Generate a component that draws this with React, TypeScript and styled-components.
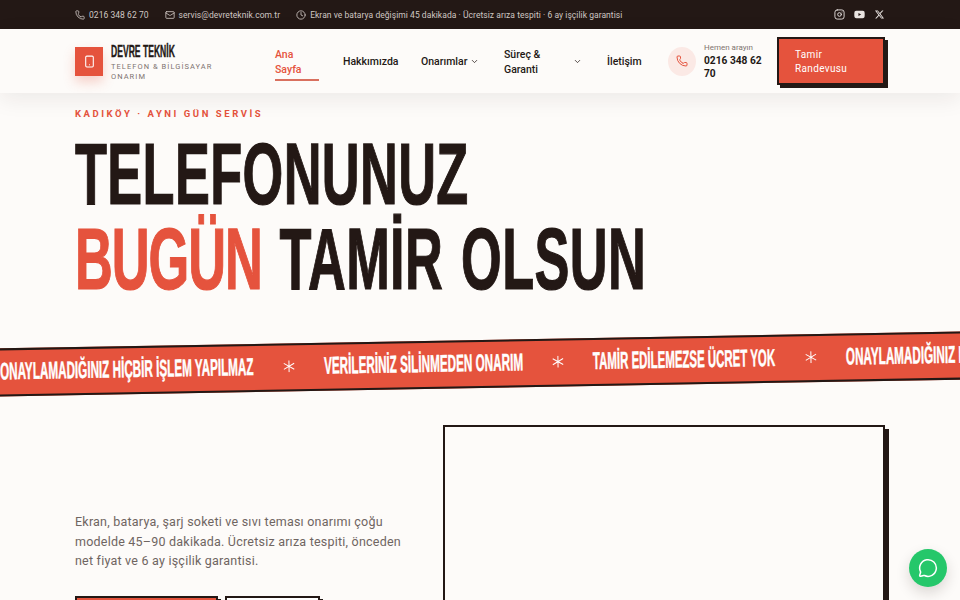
import { Fragment } from "react";
import styled, { createGlobalStyle } from "styled-components";
import { ChevronDown, Clock, Instagram, Mail, MessageCircle, Phone, Smartphone } from "lucide-react";
import { FaYoutube } from "react-icons/fa";
import { RiTwitterXFill } from "react-icons/ri";

const ink = "#231815";
const coral = "#e5533d";
const paper = "#fdfbf9";
const bodyFont = `"Roboto", "Liberation Sans", sans-serif`;
const displayFont = `"Liberation Sans", "Arial", sans-serif`;

const GlobalStyle = createGlobalStyle`
    html, body {
        margin: 0;
        height: 600px;
        overflow: hidden;
        background-color: ${paper};
        color: ${ink};
        font-family: ${bodyFont};
    }
    * {
        box-sizing: border-box;
    }
`;

const TopBar = styled.div`
    height: 29px;
    padding: 0 75px;
    background-color: ${ink};
    color: #cfc7c3;
    font-size: 8.5px;
    display: flex;
    align-items: center;
    justify-content: space-between;
`;
const TopInfo = styled.div`
    display: flex;
    gap: 16px;
`;
const TopItem = styled.span`
    display: flex;
    align-items: center;
    gap: 4px;
    letter-spacing: 0.05px;
    white-space: nowrap;
`;
const Socials = styled.div`
    display: flex;
    align-items: center;
    gap: 9px;
    color: #e9e4e1;
`;

const Header = styled.header`
    position: relative;
    z-index: 2;
    height: 64px;
    padding: 0 75px;
    background-color: ${paper};
    box-shadow: 0 6px 22px rgba(35, 24, 21, 0.08);
    display: flex;
    align-items: center;
`;
const Brand = styled.div`
    width: 200px;
    display: flex;
    align-items: center;
    gap: 8px;
`;
const BrandMark = styled.div`
    width: 28px;
    height: 29px;
    flex: none;
    background-color: ${coral};
    color: #fff;
    box-shadow: 0 6px 12px rgba(229, 83, 61, 0.25);
    display: flex;
    align-items: center;
    justify-content: center;
`;
const BrandText = styled.div`
    width: 110px;
    padding-top: 4px;
    display: flex;
    flex-direction: column;
    gap: 3px;
`;
const BrandName = styled.span`
    display: inline-block;
    font-family: ${displayFont};
    font-weight: 700;
    font-size: 16.5px;
    line-height: 15px;
    white-space: nowrap;
    -webkit-text-stroke: 0.4px ${ink};
    transform: scaleX(0.52);
    transform-origin: left;
`;
const BrandSub = styled.span`
    font-size: 7.5px;
    line-height: 10px;
    letter-spacing: 1.05px;
    color: #7d7370;
`;

const Nav = styled.nav`
    display: flex;
    align-items: center;
`;
const NavLink = styled.a<{ $width: number; $active?: boolean }>`
    width: ${(p) => p.$width}px;
    flex: none;
    padding: 5px 0 2px;
    font-size: 10.5px;
    font-weight: 500;
    line-height: 15px;
    color: ${(p) => (p.$active ? coral : ink)};
    border-bottom: 2px solid ${(p) => (p.$active ? "#d9705f" : "transparent")};
    display: flex;
    align-items: center;
    justify-content: space-between;
`;
const NavGap = styled.span<{ $width: number }>`
    width: ${(p) => p.$width}px;
    flex: none;
`;

const CallBox = styled.div`
    margin-left: 27px;
    width: 100px;
    flex: none;
    display: flex;
    align-items: center;
    gap: 8px;
`;
const CallIcon = styled.div`
    width: 28px;
    height: 29px;
    flex: none;
    border-radius: 50%;
    background-color: #fbe9e5;
    color: ${coral};
    display: flex;
    align-items: center;
    justify-content: center;
`;
const CallText = styled.div`
    width: 60px;
    display: flex;
    flex-direction: column;
`;
const CallLabel = styled.span`
    font-size: 8px;
    line-height: 12px;
    color: #7d7370;
`;
const CallNumber = styled.span`
    font-size: 10.2px;
    font-weight: 700;
    line-height: 13px;
`;
const CtaButton = styled.button`
    margin-left: auto;
    width: 108px;
    height: 48px;
    padding: 2px 24px 0 16px;
    border: 2px solid ${ink};
    background-color: ${coral};
    color: #fff;
    font-family: ${bodyFont};
    font-size: 10px;
    font-weight: 400;
    line-height: 14px;
    letter-spacing: 0.35px;
    text-align: left;
    box-shadow: 3px 3px 0 ${ink};
`;

const Hero = styled.section`
    padding: 14px 75px 0;
`;
const Eyebrow = styled.div`
    font-size: 9.5px;
    font-weight: 700;
    line-height: 14px;
    letter-spacing: 2.55px;
    color: ${coral};
`;
const HeroTitle = styled.h1`
    margin: 10px 0 0;
    font-family: ${displayFont};
    font-size: 88px;
    font-weight: 700;
    line-height: 85px;
    letter-spacing: 0.6px;
    word-spacing: 5px;
    white-space: nowrap;
    -webkit-text-stroke: 1.2px currentColor;
    transform: scaleX(0.595);
    transform-origin: left;
`;
const Accent = styled.span`
    color: ${coral};
    letter-spacing: -1.8px;
`;

const Ribbon = styled.div`
    margin: 39px 0 0 -20px;
    width: 1000px;
    height: 48px;
    overflow: hidden;
    padding: 0 0 2px 20px;
    background-color: ${coral};
    border-top: 2px solid ${ink};
    border-bottom: 2px solid ${ink};
    transform: rotate(-1deg);
    display: flex;
    align-items: center;
    gap: 28px;
    color: #fff;
`;
const Phrase = styled.span<{ $width: number }>`
    width: ${(p) => p.$width}px;
    flex: none;
`;
const PhraseText = styled.span<{ $scale: number }>`
    display: inline-block;
    font-family: ${displayFont};
    font-size: 24px;
    font-weight: 700;
    white-space: nowrap;
    -webkit-text-stroke: 0.5px #fff;
    transform: scaleX(${(p) => p.$scale});
    transform-origin: left;
`;
const Star = styled.span`
    width: 14px;
    flex: none;
    display: flex;
    justify-content: center;
`;

const Lower = styled.section`
    margin-top: 37px;
    padding: 0 75px;
    display: grid;
    grid-template-columns: 335px 442px;
    justify-content: space-between;
`;
const Intro = styled.div`
    padding-top: 87px;
`;
const Lead = styled.p`
    margin: 0;
    font-size: 12.5px;
    line-height: 19.5px;
    letter-spacing: 0.22px;
    color: #6f6561;
`;
const Actions = styled.div`
    margin-top: 25px;
    display: flex;
    gap: 7px;
`;
const ActionButton = styled.button<{ $primary?: boolean; $width: number }>`
    width: ${(p) => p.$width}px;
    height: 44px;
    border: 2px solid ${ink};
    background-color: ${(p) => (p.$primary ? coral : "#fff")};
    box-shadow: 3px 3px 0 ${ink};
`;
const MediaFrame = styled.div`
    height: 420px;
    background-color: ${paper};
    border: 2px solid ${ink};
    box-shadow: 4px 4px 0 ${ink};
`;

const ChatButton = styled.button`
    position: fixed;
    right: 13px;
    bottom: 13px;
    width: 38px;
    height: 38px;
    padding: 0;
    border: none;
    border-radius: 50%;
    background-color: #25c76a;
    color: #fff;
    box-shadow: 0 6px 14px rgba(35, 24, 21, 0.16);
    display: flex;
    align-items: center;
    justify-content: center;
`;

const phrases = [
    { text: "ONAYLAMADIĞINIZ HİÇBİR İŞLEM YAPILMAZ", width: 254, scale: 0.487 },
    { text: "VERİLERİNİZ SİLİNMEDEN ONARIM", width: 199, scale: 0.488 },
    { text: "TAMİR EDİLEMEZSE ÜCRET YOK", width: 183, scale: 0.477 },
    { text: "ONAYLAMADIĞINIZ HİÇBİR İŞLEM YAPILMAZ", width: 254, scale: 0.487 },
];

export default function App() {
    return (
        <>
            <GlobalStyle />
            <TopBar>
                <TopInfo>
                    <TopItem>
                        <Phone size={10} />
                        0216 348 62 70
                    </TopItem>
                    <TopItem>
                        <Mail size={10} />
                        servis@devreteknik.com.tr
                    </TopItem>
                    <TopItem>
                        <Clock size={10} />
                        Ekran ve batarya değişimi 45 dakikada · Ücretsiz arıza tespiti · 6 ay işçilik garantisi
                    </TopItem>
                </TopInfo>
                <Socials>
                    <Instagram size={11} />
                    <FaYoutube size={11} />
                    <RiTwitterXFill size={11} />
                </Socials>
            </TopBar>
            <Header>
                <Brand>
                    <BrandMark>
                        <Smartphone size={13} />
                    </BrandMark>
                    <BrandText>
                        <BrandName>DEVRE TEKNİK</BrandName>
                        <BrandSub>TELEFON &amp; BİLGİSAYAR ONARIM</BrandSub>
                    </BrandText>
                </Brand>
                <Nav>
                    <NavLink $width={44} $active>
                        Ana Sayfa
                    </NavLink>
                    <NavGap $width={24} />
                    <NavLink $width={54}>Hakkımızda</NavLink>
                    <NavGap $width={24} />
                    <NavLink $width={58}>
                        Onarımlar
                        <ChevronDown size={9} />
                    </NavLink>
                    <NavGap $width={25} />
                    <NavLink $width={78}>
                        Süreç &amp;<br />
                        Garanti
                        <ChevronDown size={9} />
                    </NavLink>
                    <NavGap $width={25} />
                    <NavLink $width={34}>İletişim</NavLink>
                </Nav>
                <CallBox>
                    <CallIcon>
                        <Phone size={12} />
                    </CallIcon>
                    <CallText>
                        <CallLabel>Hemen arayın</CallLabel>
                        <CallNumber>0216 348 62 70</CallNumber>
                    </CallText>
                </CallBox>
                <CtaButton>Tamir Randevusu</CtaButton>
            </Header>
            <main>
                <Hero>
                    <Eyebrow>KADIKÖY · AYNI GÜN SERVİS</Eyebrow>
                    <HeroTitle>
                        TELEFONUNUZ
                        <br />
                        <Accent>BUGÜN</Accent> TAMİR OLSUN
                    </HeroTitle>
                </Hero>
                <Ribbon>
                    {phrases.map((phrase, index) => (
                        <Fragment key={index}>
                            <Phrase $width={phrase.width}>
                                <PhraseText $scale={phrase.scale}>{phrase.text}</PhraseText>
                            </Phrase>
                            <Star>
                                <svg width="12" height="12" viewBox="0 0 12 12" stroke="#fff" strokeWidth="1">
                                    <path d="M6 0v12M.8 3l10.4 6M.8 9l10.4-6" />
                                </svg>
                            </Star>
                        </Fragment>
                    ))}
                </Ribbon>
                <Lower>
                    <Intro>
                        <Lead>
                            Ekran, batarya, şarj soketi ve sıvı teması onarımı çoğu modelde 45–90 dakikada. Ücretsiz
                            arıza tespiti, önceden net fiyat ve 6 ay işçilik garantisi.
                        </Lead>
                        <Actions>
                            <ActionButton $primary $width={143} />
                            <ActionButton $width={95} />
                        </Actions>
                    </Intro>
                    <MediaFrame />
                </Lower>
            </main>
            <ChatButton aria-label="WhatsApp">
                <MessageCircle size={20} strokeWidth={1.8} />
            </ChatButton>
        </>
    );
}
